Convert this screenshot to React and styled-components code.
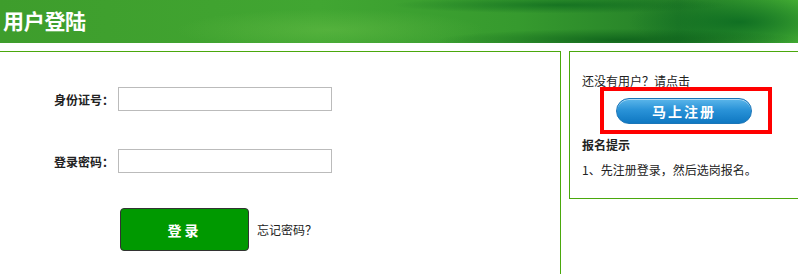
import React from "react";
import styled, { createGlobalStyle } from "styled-components";

const Global = createGlobalStyle`
  html, body { margin: 0; padding: 0; background: #fff; overflow: hidden; }
  body { font-family: "Noto Sans CJK SC", "Noto Sans", sans-serif; font-size: 12px; color: #333; }
`;

const Header = styled.div`
  height: 43px;
  overflow: hidden;
  background:
    radial-gradient(ellipse 260px 16px at 620px 40px, rgba(0,80,20,0.6), rgba(0,80,20,0) 70%),
    radial-gradient(ellipse 240px 12px at 560px 5px, rgba(0,90,25,0.55), rgba(0,90,25,0) 70%),
    radial-gradient(ellipse 160px 40px at 740px 22px, rgba(0,95,30,0.7), rgba(0,95,30,0) 70%),
    radial-gradient(ellipse 220px 30px at 330px 30px, rgba(120,200,80,0.35), rgba(120,200,80,0) 70%),
    linear-gradient(90deg, #3e9d2c 0%, #41a632 40%, #369a2e 65%, #247f28 85%, #46b034 100%);
  display: flex;
  align-items: center;
`;

const Title = styled.h1`
  margin: -2px 0 0 3px;
  color: #fff;
  font-size: 21px;
  font-weight: 700;
  letter-spacing: -0.3px;
  line-height: 1;
`;

const Body = styled.div`
  display: flex;
  gap: 8px;
  margin-top: 8px;
  align-items: flex-start;
`;

const LeftPanel = styled.div`
  width: 561px;
  height: 223px;
  border-top: 1px solid #4aa80c;
  border-right: 1px solid #4aa80c;
  flex-shrink: 0;
  padding-top: 35px;
  box-sizing: border-box;
`;

const Row = styled.div`
  display: flex;
  align-items: center;
  height: 24px;
  margin-bottom: ${(p) => p.$mb || 0}px;
`;

const Label = styled.label`
  width: 112px;
  padding-left: 54px;
  box-sizing: border-box;
  font-weight: 700;
  font-size: 12px;
  color: #222;
  white-space: nowrap;
`;

const Input = styled.input`
  margin-left: 6px;
  width: 214px;
  height: 24px;
  box-sizing: border-box;
  border: 1px solid #bbb;
  outline: none;
  padding: 0 4px;
`;

const ActionRow = styled.div`
  display: flex;
  align-items: center;
  margin-top: 35px;
  padding-left: 120px;
`;

const LoginButton = styled.button`
  width: 129px;
  height: 43px;
  background: #009900;
  border: 1px solid #333;
  border-radius: 4px;
  color: #fff;
  font-weight: 700;
  font-size: 14px;
  letter-spacing: 3px;
  font-family: inherit;
  cursor: pointer;
`;

const Forgot = styled.a`
  margin-left: 8px;
  font-size: 12px;
  color: #222;
  text-decoration: none;
`;

const RightPanel = styled.div`
  width: 260px;
  height: 148px;
  border: 1px solid #4aa80c;
  box-sizing: border-box;
  flex-shrink: 0;
  padding: 22px 0 0 12px;
`;

const Hint = styled.p`
  margin: 0;
  font-size: 12px;
  line-height: 14px;
  color: #222;
`;

const RedBox = styled.div`
  margin: -1px 0 0 18px;
  width: 172px;
  height: 47px;
  border: 4px solid #ff0000;
  box-sizing: border-box;
  display: flex;
  align-items: center;
  padding-left: 12px;
`;

const RegisterButton = styled.button`
  width: 136px;
  height: 26px;
  border-radius: 13px;
  border: 1px solid #1a75b8;
  background: linear-gradient(180deg, #5bb6ea 0%, #2a93d8 45%, #0f78c2 100%);
  box-shadow: inset 0 1px 0 rgba(255,255,255,0.5);
  color: #fff;
  font-size: 14px;
  font-weight: 700;
  letter-spacing: 2px;
  font-family: inherit;
  cursor: pointer;
`;

const TipTitle = styled.h3`
  margin: 4px 0 0 0;
  font-size: 12px;
  font-weight: 700;
  color: #222;
  line-height: 14px;
`;

const TipText = styled.p`
  margin: 11px 0 0 0;
  font-size: 12px;
  line-height: 14px;
  color: #222;
`;

export default function App() {
  return (
    <>
      <Global />
      <Header>
        <Title>用户登陆</Title>
      </Header>
      <Body>
        <LeftPanel>
          <Row $mb={38}>
            <Label>身份证号：</Label>
            <Input type="text" />
          </Row>
          <Row>
            <Label>登录密码：</Label>
            <Input type="password" />
          </Row>
          <ActionRow>
            <LoginButton>登录</LoginButton>
            <Forgot href="#">忘记密码？</Forgot>
          </ActionRow>
        </LeftPanel>
        <RightPanel>
          <Hint>还没有用户？请点击</Hint>
          <RedBox>
            <RegisterButton>马上注册</RegisterButton>
          </RedBox>
          <TipTitle>报名提示</TipTitle>
          <TipText>1、先注册登录，然后选岗报名。</TipText>
        </RightPanel>
      </Body>
    </>
  );
}
